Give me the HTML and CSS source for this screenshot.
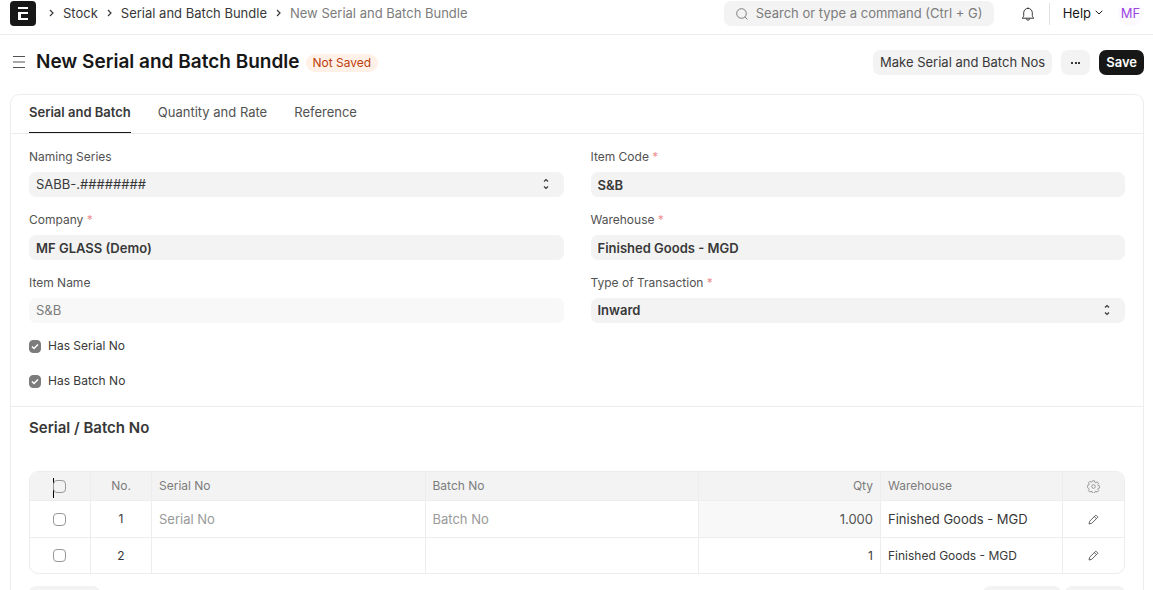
FILE: index.html
```html
<!DOCTYPE html>
<html lang="en">
<head>
    <meta charset="UTF-8">
    <meta name="viewport" content="width=device-width, initial-scale=1.0">
    <title>New Serial and Batch Bundle</title>
    <link rel="stylesheet" href="styles.css">
</head>
<body>

    <header class="navbar">
        <a class="logo" href="#" aria-label="Home">
            <svg width="26" height="25" viewBox="0 0 26 25">
                <rect width="26" height="25" rx="4" fill="#171717"/>
                <path d="M8 6h10v2H8zM8 11h10v2h-7v4h7v2H8z" fill="#fff"/>
            </svg>
        </a>
        <nav class="breadcrumbs" aria-label="Breadcrumb">
            <svg class="sep" viewBox="0 0 5 8"><path d="M1 1l3 3-3 3"/></svg>
            <a href="#">Stock</a>
            <svg class="sep" viewBox="0 0 5 8"><path d="M1 1l3 3-3 3"/></svg>
            <a href="#">Serial and Batch Bundle</a>
            <svg class="sep" viewBox="0 0 5 8"><path d="M1 1l3 3-3 3"/></svg>
            <a class="current" href="#">New Serial and Batch Bundle</a>
        </nav>
        <div class="search">
            <svg class="icon" width="12" height="12" viewBox="0 0 12 12"><circle cx="5.5" cy="5.5" r="4.8"/><path d="M9 9l2.5 2.5"/></svg>
            <input type="text" aria-label="Search" placeholder="Search or type a command (Ctrl + G)">
        </div>
        <button class="bell" aria-label="Notifications">
            <svg class="icon" width="14" height="14" viewBox="0 0 14 14"><path d="M1.2 11.2h11.6c-1-.9-1.5-1.6-1.5-2.8V5.7a4.3 4.3 0 0 0-8.6 0v2.7c0 1.2-.5 1.9-1.5 2.8zM5.3 11.5a1.7 1.7 0 0 0 3.4 0M7 .4v1"/></svg>
        </button>
        <button class="help">Help
            <svg class="icon" width="8" height="5" viewBox="0 0 8 5"><path d="M.7.8L4 4 7.3.8"/></svg>
        </button>
        <button class="avatar">MF</button>
    </header>

    <div class="page-head">
        <button class="menu" aria-label="Toggle sidebar">
            <svg width="12" height="12" viewBox="0 0 12 12"><path d="M0 .5h12M0 11.5h12" stroke="#525252"/><path d="M0 6h12" stroke="#aaa" stroke-width="2"/></svg>
        </button>
        <h1>New Serial and Batch Bundle</h1>
        <span class="status">Not Saved</span>
        <div class="actions">
            <button class="btn">Make Serial and Batch Nos</button>
            <button class="btn btn-dots" aria-label="More">
                <svg width="9" height="2" viewBox="0 0 9 2" fill="#383838"><path d="M0 0h2v2H0zM4 0h2v2H4zM7 0h2v2H7z"/></svg>
            </button>
            <button class="btn btn-primary">Save</button>
        </div>
    </div>

    <main class="card">
        <div class="tabs" role="tablist">
            <button class="tab active" role="tab" aria-selected="true">Serial and Batch</button>
            <button class="tab" role="tab" aria-selected="false">Quantity and Rate</button>
            <button class="tab" role="tab" aria-selected="false">Reference</button>
        </div>

        <form class="form">
            <div class="column">
                <div class="field">
                    <label for="series">Naming Series</label>
                    <div class="select">
                        <select id="series"><option>SABB-.########</option></select>
                        <svg class="arrows" viewBox="0 0 6 12"><path d="M1 3.5l2-2 2 2M1 8.5l2 2 2-2"/></svg>
                    </div>
                </div>
                <div class="field">
                    <label for="company">Company <span class="req">*</span></label>
                    <input class="bold" type="text" id="company" value="MF GLASS (Demo)">
                </div>
                <div class="field">
                    <label for="itemName">Item Name</label>
                    <input type="text" id="itemName" value="S&amp;B" disabled>
                </div>
                <label class="check"><input type="checkbox" checked> Has Serial No</label>
                <label class="check"><input type="checkbox" checked> Has Batch No</label>
            </div>
            <div class="column">
                <div class="field">
                    <label for="itemCode">Item Code <span class="req">*</span></label>
                    <input class="bold" type="text" id="itemCode" value="S&amp;B">
                </div>
                <div class="field">
                    <label for="warehouse">Warehouse <span class="req">*</span></label>
                    <input class="bold" type="text" id="warehouse" value="Finished Goods - MGD">
                </div>
                <div class="field">
                    <label for="type">Type of Transaction <span class="req">*</span></label>
                    <div class="select">
                        <select class="bold" id="type"><option>Inward</option></select>
                        <svg class="arrows" viewBox="0 0 6 12"><path d="M1 3.5l2-2 2 2M1 8.5l2 2 2-2"/></svg>
                    </div>
                </div>
            </div>
        </form>

        <section class="section">
            <h2>Serial / Batch No</h2>
            <div class="grid">
                <table>
                    <colgroup>
                        <col class="col-check"><col class="col-no"><col class="col-wide"><col class="col-wide"><col class="col-mid"><col class="col-mid"><col class="col-edit">
                    </colgroup>
                    <thead>
                        <tr>
                            <th class="center"><span class="pick"><i class="caret"></i><input type="checkbox" aria-label="Select all rows"></span></th>
                            <th class="center">No.</th>
                            <th>Serial No</th>
                            <th>Batch No</th>
                            <th class="right">Qty</th>
                            <th>Warehouse</th>
                            <th class="center">
                                <button aria-label="Configure columns">
                                    <svg width="13" height="13" viewBox="0 0 13 13" class="gear"><circle cx="6.5" cy="6.5" r="1.8"/><path d="M5.5.8h2l.4 1.5 1 .4 1.3-.8 1.4 1.4-.8 1.3.4 1 1.500.4v2l-1.500.4-.4 1 .8 1.300-1.400 1.400-1.300-.8-1 .4-.4 1.500h-2l-.4-1.500-1-.4-1.300.8-1.400-1.400.8-1.300-.4-1L.3 7.500v-2l1.500-.4.4-1-.8-1.300 1.400-1.400 1.300.8 1-.4z"/></svg>
                                </button>
                            </th>
                        </tr>
                    </thead>
                    <tbody>
                        <tr class="editing">
                            <td class="center"><input type="checkbox" aria-label="Select row 1"></td>
                            <td class="center">1</td>
                            <td><input type="text" aria-label="Serial No" placeholder="Serial No"></td>
                            <td><input type="text" aria-label="Batch No" placeholder="Batch No"></td>
                            <td class="locked"><input class="right" type="text" aria-label="Qty" value="1.000" readonly></td>
                            <td><input type="text" aria-label="Warehouse" value="Finished Goods - MGD"></td>
                            <td class="center">
                                <button aria-label="Edit row 1"><svg width="11" height="11" viewBox="0 0 11 11" class="pencil"><path d="M1 10l.7-2.800L7.800 1.100l2.100 2.100-6.100 6.100zM6.300 2.600l2.100 2.100"/></svg></button>
                            </td>
                        </tr>
                        <tr>
                            <td class="center"><input type="checkbox" aria-label="Select row 2"></td>
                            <td class="center">2</td>
                            <td></td>
                            <td></td>
                            <td class="right">1</td>
                            <td>Finished Goods - MGD</td>
                            <td class="center">
                                <button aria-label="Edit row 2"><svg width="11" height="11" viewBox="0 0 11 11" class="pencil"><path d="M1 10l.7-2.800L7.800 1.100l2.100 2.100-6.100 6.100zM6.300 2.600l2.100 2.100"/></svg></button>
                            </td>
                        </tr>
                    </tbody>
                </table>
            </div>
            <div class="grid-footer">
                <button class="btn">Add Row</button>
                <button class="btn push">Download</button>
                <button class="btn">Upload</button>
            </div>
        </section>
    </main>

</body>
</html>
```

FILE: styles.css
```css
* {
    box-sizing: border-box;
}
body {
    margin: 0;
    height: 100vh;
    overflow: hidden;
    background: #fff;
    color: #383838;
    font-family: Inter, sans-serif;
    font-size: 13px;
    line-height: 18px;
}
a {
    color: inherit;
    text-decoration: none;
}
button, input, select {
    font: inherit;
    color: inherit;
    border: 0;
    margin: 0;
    padding: 0;
    background: none;
    outline: 0;
}
svg {
    display: block;
    flex: none;
}
.icon {
    fill: none;
    stroke: currentColor;
}

/* navbar */
.navbar {
    display: flex;
    align-items: center;
    padding: 1px 10px 8px;
    border-bottom: 1px solid #ededed;
}
.breadcrumbs {
    display: flex;
    align-items: center;
    gap: 9px;
    margin-left: 13px;
    padding-bottom: 2px;
    white-space: nowrap;
}
.breadcrumbs .current {
    color: #7c7c7c;
}
.sep {
    width: 5px;
    height: 8px;
    fill: none;
    stroke: #383838;
    stroke-width: 1.2;
}
.search {
    display: flex;
    align-items: center;
    gap: 8px;
    width: 270px;
    height: 25px;
    margin-left: auto;
    padding: 0 12px;
    border-radius: 7px;
    background: #f3f3f3;
    color: #7c7c7c;
}
.search input {
    flex: 1;
    min-width: 0;
    padding-bottom: 2px;
}
::placeholder {
    color: #7c7c7c;
    opacity: 1;
}
.bell {
    margin-left: 27px;
}
.help {
    display: flex;
    align-items: center;
    gap: 4px;
    height: 22px;
    margin-left: 14px;
    padding: 0 0 2px 13px;
    border-left: 1px solid #e2e2e2;
    color: #171717;
}
.avatar {
    width: 25px;
    height: 25px;
    margin-left: 15px;
    padding-bottom: 2px;
    border-radius: 50%;
    background: #fdfaff;
    color: #9c45e3;
}

/* page head */
.page-head {
    display: flex;
    align-items: center;
    padding: 15px 9px 19px 13px;
}
.menu {
    padding-bottom: 2px;
}
h1 {
    margin: 0 6px 0 11px;
    padding-bottom: 2px;
    color: #171717;
    font-size: 19px;
    line-height: 23px;
    font-weight: 600;
}
.status {
    padding: 0 7px 1px;
    border-radius: 9px;
    background: #fff1e7;
    color: #bd3e0c;
    font-size: 12px;
    line-height: 17px;
}
.actions {
    display: flex;
    gap: 9px;
    margin-left: auto;
}
.btn {
    display: flex;
    align-items: center;
    height: 25px;
    padding: 0 7px 2px;
    border-radius: 7px;
    background: #f3f3f3;
}
.btn-dots {
    padding: 0 10px;
}
.btn-primary {
    background: #171717;
    color: #fff;
    font-weight: 600;
}

/* form */
.card {
    margin: 0 9px 0 10px;
    height: 100vh;
    border: 1px solid #ededed;
    border-radius: 9px;
}
.tabs {
    display: flex;
    gap: 27px;
    padding: 0 18px;
    border-bottom: 1px solid #ededed;
}
.tab {
    padding: 8px 0 11px;
    border-bottom: 1px solid transparent;
    color: #525252;
}
.tab.active {
    border-color: #171717;
    color: #383838;
    font-weight: 600;
}
.form {
    display: grid;
    grid-template-columns: 1fr 1fr;
    gap: 27px;
    padding: 14px 18px 16px;
}
.field {
    margin-bottom: 14px;
}
.field label {
    display: block;
    margin-bottom: 6px;
    color: #525252;
    font-size: 12px;
}
.req {
    color: #eb9091;
}
.field input, .field select {
    display: block;
    appearance: none;
    width: 100%;
    height: 25px;
    padding: 0 7px;
    border-radius: 7px;
    background: #f3f3f3;
}
.field select, .field input:disabled {
    padding-bottom: 2px;
}
.field input:disabled {
    background: #f8f8f8;
    color: #7c7c7c;
}
.field .bold {
    font-weight: 600;
}
.select {
    position: relative;
}
.arrows {
    position: absolute;
    top: 6px;
    right: 15px;
    width: 6px;
    height: 12px;
    fill: none;
    stroke: #383838;
    stroke-width: 1.2;
}
.check {
    display: flex;
    align-items: center;
    gap: 7px;
    font-size: 12px;
}
.check + .check {
    margin-top: 17px;
}
input[type="checkbox"] {
    appearance: none;
    display: block;
    width: 13px;
    height: 13px;
    border: 1px solid #999;
    border-radius: 4px;
}
input[type="checkbox"]:checked {
    width: 12px;
    border-color: #7c7c7c;
    background: #7c7c7c url("data:image/svg+xml,%3Csvg xmlns='http://www.w3.org/2000/svg' viewBox='0 0 8 7'%3E%3Cpath d='M1 3.5l2 2L7 1.5' fill='none' stroke='white' stroke-width='1.5'/%3E%3C/svg%3E") center / 8px 7px no-repeat;
}

/* child table */
.section {
    padding: 12px 18px;
    border-top: 1px solid #ededed;
}
h2 {
    margin: 0 0 34px;
    font-size: 15px;
    line-height: 18px;
    font-weight: 600;
}
.grid {
    overflow: hidden;
    border: 1px solid #ededed;
    border-radius: 9px;
}
table {
    width: 100%;
    table-layout: fixed;
    border-collapse: separate;
    border-spacing: 0;
    font-size: 12px;
}
.col-check, .col-no {
    width: 61px;
}
.col-wide {
    width: 25%;
}
.col-edit {
    width: 61px;
}
th, td {
    height: 35px;
    padding: 0 7px;
    border-right: 1px solid #ededed;
    text-align: left;
    font-weight: 400;
}
th {
    height: 29px;
    border-bottom: 1px solid #ededed;
    background: #f3f3f3;
    color: #7c7c7c;
}
th:first-child, td:first-child {
    padding: 0 8px 0 6px;
}
th:last-child, td:last-child {
    border-right: 0;
}
.editing td {
    height: 37px;
    border-bottom: 1px solid #ededed;
}
.editing input[type="text"] {
    display: block;
    width: 100%;
    padding-bottom: 1px;
    font-size: 13px;
}
.editing ::placeholder {
    color: #999;
}
.locked {
    background: #f8f8f8;
    color: #525252;
}
.right {
    text-align: right;
}
.center {
    text-align: center;
}
.center > input, .center button {
    display: block;
    margin: 0 auto;
}
.gear {
    fill: none;
    stroke: #999;
}
.pencil {
    fill: none;
    stroke: #636363;
}
.pick {
    display: block;
    position: relative;
    width: 13px;
    margin: 0 auto;
}
.pick input {
    position: relative;
}
.caret {
    position: absolute;
    top: -2px;
    left: 0;
    width: 1px;
    height: 20px;
    background: #000;
}
.grid-footer {
    display: flex;
    gap: 4px;
    margin-top: 12px;
}
.grid-footer .btn {
    padding: 0 8px;
}
.grid-footer .push {
    margin-left: auto;
}
```
